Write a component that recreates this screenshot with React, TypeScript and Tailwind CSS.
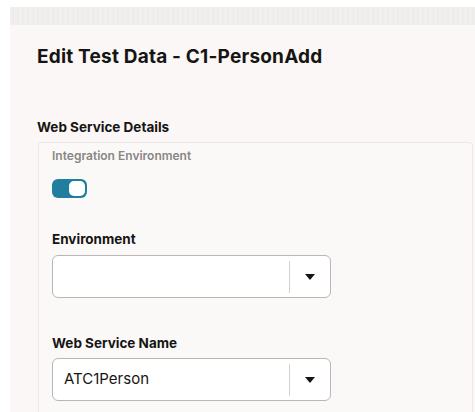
import React from 'react';

const font = { fontFamily: 'Inter, "Liberation Sans", Arial, sans-serif' };

function Caret() {
  return (
    <svg width="10" height="6" viewBox="0 0 10 6" aria-hidden="true">
      <path d="M0 0h10L5 6z" fill="#161513" />
    </svg>
  );
}

function SelectBox({ value }: { value?: string }) {
  return (
    <div className="flex h-[43px] w-[279px] items-center rounded-[6px] border border-[#b9b6b3] bg-white">
      <span className="flex-1 truncate pl-[11px] text-[15px] text-[#161513]">{value}</span>
      <span className="h-[32px] w-px bg-[#d4d1ce]" />
      <span className="flex w-[40px] items-center justify-center">
        <Caret />
      </span>
    </div>
  );
}

function Toggle({ on }: { on: boolean }) {
  return (
    <div
      className={`flex h-[19px] w-[35px] items-center rounded-[6px] p-[2px] ${
        on ? 'justify-end bg-[#227e9e]' : 'justify-start bg-[#8d8a87]'
      }`}
    >
      <span className="h-[15px] w-[16px] rounded-[5px] bg-white" />
    </div>
  );
}

export default function App() {
  return (
    <div className="min-h-screen bg-white pl-[10px] pt-[7px]" style={font}>
      {/* toolbar strip */}
      <div className="h-[18px] bg-[#f0efee] bg-[repeating-linear-gradient(90deg,#f5f4f3_0px,#ecebea_1px,#f3f2f1_2px,#e9e8e7_3px,#f4f3f2_5px)]" />

      <div className="min-h-[387px] bg-[#faf7f6] pl-[27px] pr-[2px] pt-[20px]">
        <h1 className="text-[19px] font-bold leading-[24px] tracking-[0.2px] text-[#161513]">
          Edit Test Data - C1-PersonAdd
        </h1>

        <h2 className="mt-[49px] text-[13.5px] font-bold leading-[18px] text-[#161513]">Web Service Details</h2>

        <div className="ml-px mt-[6px] rounded-t-[4px] border border-b-0 border-[#ebe8e6] bg-[#fbf9f8] pl-[13px] pt-[5px] pb-[20px]">
          <div className="text-[12px] font-semibold leading-[16px] text-[#8a8685]">Integration Environment</div>
          <div className="mt-[15px]">
            <Toggle on />
          </div>

          <div className="mt-[32px] text-[13.5px] font-bold leading-[18px] text-[#161513]">Environment</div>
          <div className="mt-[7px]">
            <SelectBox />
          </div>

          <div className="mt-[36px] text-[13.5px] font-bold leading-[18px] text-[#161513]">Web Service Name</div>
          <div className="mt-[6px]">
            <SelectBox value="ATC1Person" />
          </div>
        </div>
      </div>
    </div>
  );
}
